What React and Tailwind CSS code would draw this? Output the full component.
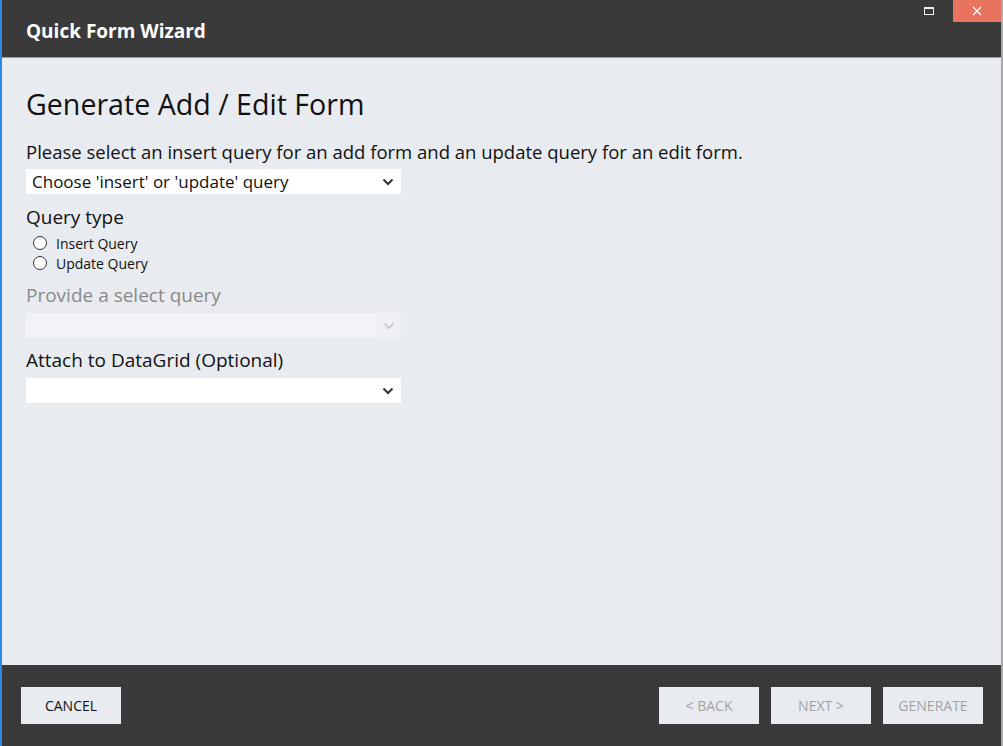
import React from "react";

const Chevron = ({ color = "#333" }) => (
  <svg width="12" height="8" viewBox="0 0 12 8">
    <path d="M1.5 1.5 L6 6 L10.5 1.5" fill="none" stroke={color} strokeWidth="2" />
  </svg>
);

const Radio = ({ label }) => (
  <div className="flex items-center h-[20px]">
    <span className="ml-[7px] w-[14px] h-[14px] rounded-full border border-[#333] bg-white" />
    <span className="ml-[9px] text-[14px] text-[#111]">{label}</span>
  </div>
);

export default function App() {
  return (
    <div
      className="w-[1003px] h-[746px] flex flex-col bg-[#e8ecf0] border-l-2 border-l-[#2b8ae0] border-r-2 border-r-[#a7a9ab] overflow-hidden"
      style={{ fontFamily: '"Open Sans", "Noto Sans", sans-serif' }}
    >
      <div className="h-[57px] bg-[#3a3a3a] flex items-start justify-between shrink-0">
        <div className="pl-[24px] pt-[18px] text-white text-[19px] font-bold leading-[26px]">Quick Form Wizard</div>
        <div className="flex">
          <div className="w-[48px] h-[22px] flex items-center justify-center">
            <span className="w-[10px] h-[8px] border border-[#eee] border-t-2" />
          </div>
          <div className="w-[48px] h-[22px] bg-[#e8735f] flex items-center justify-center">
            <svg width="10" height="10" viewBox="0 0 10 10">
              <path d="M1 1 L9 9 M9 1 L1 9" stroke="white" strokeWidth="1.3" />
            </svg>
          </div>
        </div>
      </div>
      <div className="h-px bg-[#9a9a9a] shrink-0" />
      <div className="flex-1 pl-[24px] pt-[28px] text-[#111]">
        <div className="text-[28.6px] leading-[36px]">Generate Add / Edit Form</div>
        <div className="mt-[18px] text-[18.5px] leading-[24px]">
          Please select an insert query for an add form and an update query for an edit form.
        </div>
        <div className="mt-[5px] w-[375px] h-[25px] bg-white flex items-center justify-between pl-[6px] pr-[7px]">
          <span className="text-[17px]">Choose 'insert' or 'update' query</span>
          <Chevron />
        </div>
        <div className="mt-[11px] text-[19px] leading-[24px]">Query type</div>
        <div className="mt-[4px]">
          <Radio label="Insert Query" />
          <Radio label="Update Query" />
        </div>
        <div className="mt-[10px] text-[19px] leading-[24px] text-[#8a8a8a]">Provide a select query</div>
        <div className="mt-[6px] w-[375px] h-[25px] flex">
          <div className="flex-1 bg-[#f1f3f6]" />
          <div className="w-[25px] bg-[#eef0f3] flex items-center justify-center">
            <Chevron color="#c9ccd0" />
          </div>
        </div>
        <div className="mt-[10px] text-[19px] leading-[24px]">Attach to DataGrid (Optional)</div>
        <div className="mt-[6px] w-[375px] h-[25px] bg-white flex items-center justify-end pr-[7px]">
          <Chevron />
        </div>
      </div>
      <div className="h-[81px] bg-[#3a3a3a] shrink-0 flex items-start justify-between pt-[22px] pl-[19px] pr-[18px]">
        <button className="w-[100px] h-[37px] bg-[#e8ecf0] text-[14px] text-[#111]">CANCEL</button>
        <div className="flex gap-[12px]">
          <button className="w-[100px] h-[37px] bg-[#e8ecf0] text-[14px] text-[#a3a3a3]">&lt; BACK</button>
          <button className="w-[100px] h-[37px] bg-[#e8ecf0] text-[14px] text-[#a3a3a3]">NEXT &gt;</button>
          <button className="w-[100px] h-[37px] bg-[#e8ecf0] text-[14px] text-[#a3a3a3]">GENERATE</button>
        </div>
      </div>
    </div>
  );
}
